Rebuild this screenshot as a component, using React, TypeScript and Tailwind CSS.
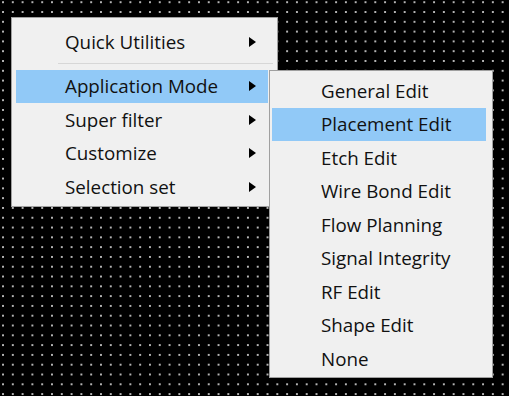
import React from 'react';

const mainItems = [
    { label: 'Application Mode', active: true },
    { label: 'Super filter', active: false },
    { label: 'Customize', active: false },
    { label: 'Selection set', active: false },
];

const subItems = [
    'General Edit',
    'Placement Edit',
    'Etch Edit',
    'Wire Bond Edit',
    'Flow Planning',
    'Signal Integrity',
    'RF Edit',
    'Shape Edit',
    'None',
];

const Arrow: React.FC = () => (
    <svg width="7" height="10" viewBox="0 0 7 10" className="ml-auto mr-[12px] shrink-0">
        <path d="M0 0 L7 5 L0 10 Z" fill="#000" />
    </svg>
);

const MainRow: React.FC<{ label: string; active?: boolean }> = ({ label, active }) => (
    <div className={`h-[33.5px] ml-[4px] mr-[9px] flex items-center pl-[49px] ${active ? 'bg-[#91c9f7]' : ''}`}>
        <span>{label}</span>
        <Arrow />
    </div>
);

const App: React.FC = () => {
    return (
        <div
            className="relative w-[509px] h-[396px] overflow-hidden bg-black bg-[radial-gradient(circle,#b4b4b4_0.8px,transparent_1.2px)] bg-size-[9.8px_9.8px] bg-position-[-1.9px_-2.7px] text-[18.8px] text-[#111] font-['Segoe_UI','Open_Sans',sans-serif]"
        >
            {/* main context menu */}
            <div className="absolute left-[11px] top-[17px] w-[267px] h-[190px] bg-[#f0f0f0] border border-[#a0a0a0] pt-[7px] pb-[3px]">
                <MainRow label="Quick Utilities" />
                <div className="h-[11px] pt-[4px]">
                    <div className="h-px ml-[46px] mr-[4px] bg-[#d7d7d7]" />
                </div>
                {mainItems.map((item) => (
                    <MainRow key={item.label} label={item.label} active={item.active} />
                ))}
            </div>

            {/* Application Mode submenu */}
            <div className="absolute left-[269px] top-[70px] w-[224px] h-[308px] bg-[#f0f0f0] border border-[#a0a0a0] pt-[3px]">
                {subItems.map((label) => (
                    <div
                        key={label}
                        className={`h-[33.5px] ml-[2px] mr-[6px] flex items-center pl-[49px] ${label === 'Placement Edit' ? 'bg-[#91c9f7]' : ''}`}
                    >
                        {label}
                    </div>
                ))}
            </div>
        </div>
    );
};

export default App;
